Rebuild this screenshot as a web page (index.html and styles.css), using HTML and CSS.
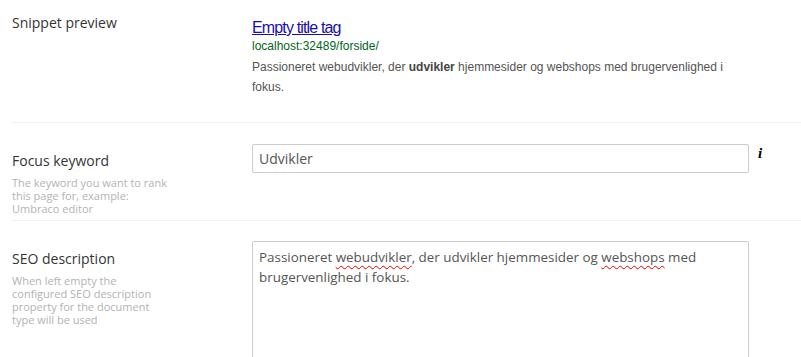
FILE: index.html
```html
<!DOCTYPE html>
<html lang="da">
<head>
<meta charset="utf-8">
<title>SEO</title>
<link rel="stylesheet" href="styles.css">
</head>
<body>
<div class="panel">
  <div class="row row-snippet">
    <div class="label-col">
      <div class="label">Snippet preview</div>
    </div>
    <div class="field-col snippet">
      <a class="snippet-title" href="#">Empty title tag</a>
      <div class="snippet-url">localhost:32489/forside/</div>
      <div class="snippet-desc">Passioneret webudvikler, der <b>udvikler</b> hjemmesider og webshops med brugervenlighed i fokus.</div>
    </div>
  </div>
  <div class="row row-keyword">
    <div class="label-col">
      <div class="label">Focus keyword</div>
      <div class="help">The keyword you want to rank this page for, example: Umbraco editor</div>
    </div>
    <div class="field-col field-inline">
      <div class="input">Udvikler</div>
      <span class="info">i</span>
    </div>
  </div>
  <div class="row row-desc">
    <div class="label-col">
      <div class="label">SEO description</div>
      <div class="help">When left empty the configured SEO description property for the document type will be used</div>
    </div>
    <div class="field-col">
      <div class="textarea">Passioneret <span class="spell">webudvikler</span>, der udvikler hjemmesider og <span class="spell">webshops</span> med brugervenlighed i fokus.</div>
    </div>
  </div>
</div>
</body>
</html>
```

FILE: styles.css
```css
html, body {
  margin: 0;
  padding: 0;
  background: #fff;
}
body {
  font-family: "Open Sans", "DejaVu Sans", sans-serif;
  color: #343434;
  overflow: hidden;
}
.panel {
  margin-left: 12px;
}
.row {
  display: flex;
  border-bottom: 1px solid #f2f2f2;
}
.label-col {
  width: 240px;
  flex: none;
}
.field-col {
  width: 496px;
  flex: none;
}
.label {
  font-size: 14px;
  line-height: 20px;
  color: #343434;
}
.help {
  font-size: 11px;
  line-height: 13px;
  color: #b3b3b3;
  width: 160px;
  margin-top: 5px;
}

/* snippet row */
.row-snippet {
  padding: 13px 0 25px;
}
.snippet {
  padding-top: 5px;
  font-family: "Liberation Sans", Arial, sans-serif;
}
.snippet-title {
  display: inline-block;
  font-size: 16px;
  line-height: 19px;
  letter-spacing: -0.85px;
  color: #1a0dab;
  text-decoration: underline;
}
.snippet-url {
  font-size: 12px;
  line-height: 18px;
  color: #006621;
}
.snippet-desc {
  margin-top: 2px;
  font-size: 12px;
  line-height: 20px;
  color: #545454;
}
.snippet-desc b {
  font-weight: bold;
  color: #444;
}

/* keyword row */
.row-keyword {
  padding: 21px 0 5px;
}
.row-keyword .label-col {
  padding-top: 7px;
}
.field-inline {
  display: flex;
  align-items: flex-start;
  width: auto;
}
.input {
  box-sizing: border-box;
  width: 497px;
  height: 29px;
  border: 1px solid #cccccc;
  border-radius: 2px;
  padding: 0 6px;
  font-size: 14px;
  line-height: 27px;
  color: #555;
}
.info {
  margin-left: 9px;
  margin-top: 1px;
  font-family: "Liberation Serif", "Times New Roman", serif;
  font-weight: bold;
  font-style: italic;
  font-size: 15px;
  line-height: 16px;
  color: #000;
}

/* description row */
.row-desc {
  padding-top: 20px;
}
.row-desc .label-col {
  padding-top: 8px;
}
.textarea {
  box-sizing: border-box;
  width: 497px;
  height: 140px;
  border: 1px solid #cccccc;
  border-radius: 2px;
  padding: 5px 6px;
  font-size: 13.4px;
  line-height: 20px;
  color: #555;
}
.spell {
  text-decoration: underline wavy #e00;
  text-decoration-thickness: 1px;
  text-underline-offset: 3px;
}
```
